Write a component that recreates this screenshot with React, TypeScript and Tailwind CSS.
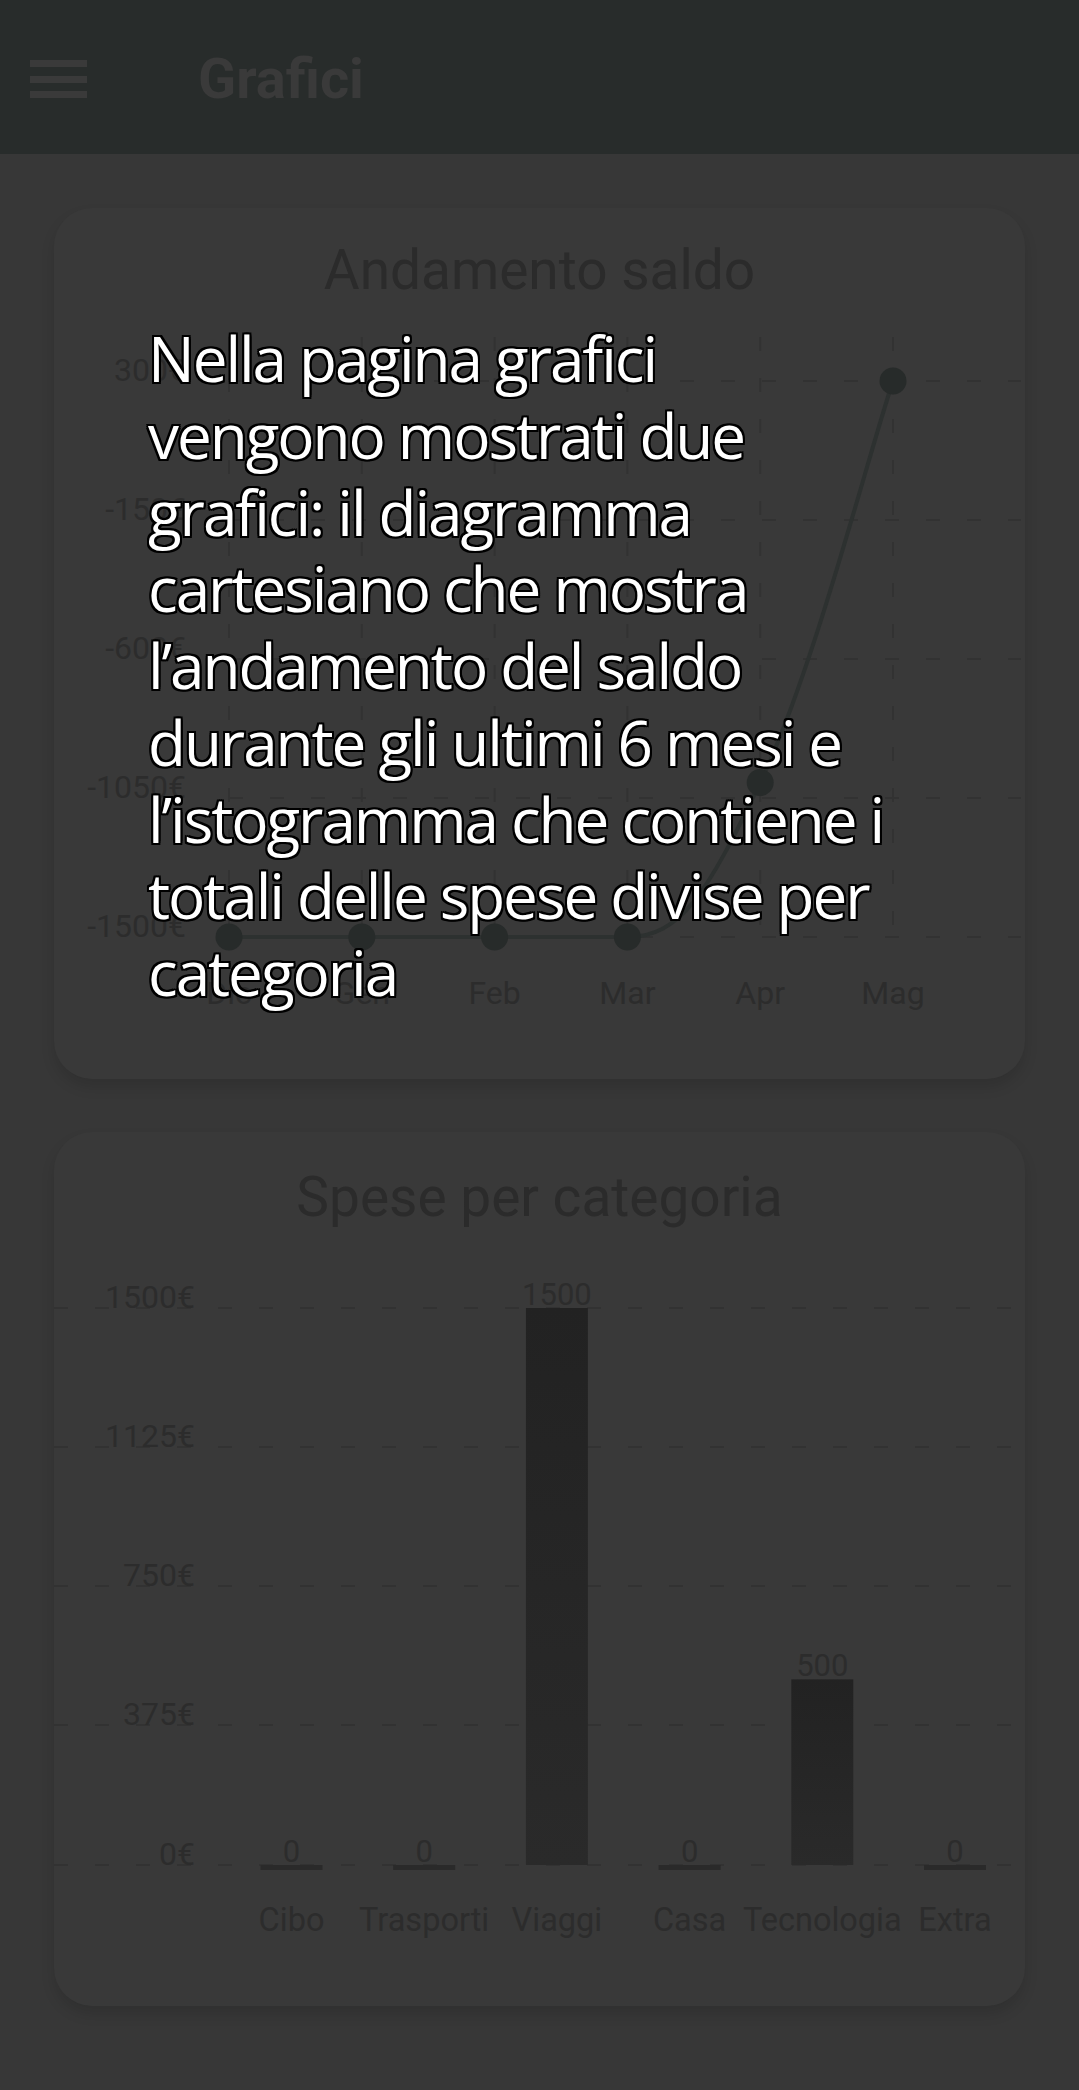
import React from "react";

const months = ["Dic", "Gen", "Feb", "Mar", "Apr", "Mag"];
const saldo = [-1500, -1500, -1500, -1500, -1000, 300];
const saldoTicks = ["300€", "-150€", "-600€", "-1050€", "-1500€"];

const categories = [
    { name: "Cibo", value: 0 },
    { name: "Trasporti", value: 0 },
    { name: "Viaggi", value: 1500 },
    { name: "Casa", value: 0 },
    { name: "Tecnologia", value: 500 },
    { name: "Extra", value: 0 },
];
const spesaTicks = ["1500€", "1125€", "750€", "375€", "0€"];

const gridY = [79, 218, 357, 496, 636];

function Header() {
    return (
        <div className="flex h-[154px] items-center bg-[#282c2b] pl-[30px] pt-[4px]">
            <svg width="57" height="38" viewBox="0 0 57 38" className="shrink-0">
                <rect x="0" y="0" width="57" height="7" fill="#3a3a3a" />
                <rect x="0" y="16" width="57" height="7" fill="#3a3a3a" />
                <rect x="0" y="31" width="57" height="7" fill="#3a3a3a" />
            </svg>
            <h1 className="ml-[111px] font-['Roboto',sans-serif] text-[56px] font-bold leading-none text-[#3a3a3a]">
                Grafici
            </h1>
        </div>
    );
}

function Card({ title, pt, children }: { title: string; pt: string; children: React.ReactNode }) {
    return (
        <div className="mx-[54px] rounded-[38px] bg-[#393939] shadow-[0_8px_14px_rgba(0,0,0,0.12)]">
            <div className={`${pt} text-center font-['Roboto',sans-serif] text-[55px] leading-[64px] text-[#2b2b2b]`}>
                {title}
            </div>
            {children}
        </div>
    );
}

function LineChart() {
    const xs = months.map((_, i) => 175 + i * 132.8);
    const toY = (v: number) => 635 - ((v + 1500) / 1800) * 556;
    const pts = saldo.map((v, i) => ({ x: xs[i], y: toY(v) }));

    // smoothed line, flat runs stay straight
    let d = `M ${pts[0].x} ${pts[0].y}`;
    for (let j = 1; j < pts.length; j++) {
        const pp = pts[Math.max(j - 2, 0)];
        const p = pts[j - 1];
        const c = pts[j];
        const n = pts[Math.min(j + 1, pts.length - 1)];
        if (p.y === c.y) {
            d += ` L ${c.x} ${c.y}`;
            continue;
        }
        const c1x = p.x + (c.x - pp.x) * 0.2;
        const c1y = pp.y === p.y ? p.y : p.y + (c.y - pp.y) * 0.2;
        const c2x = c.x - (n.x - p.x) * 0.2;
        const c2y = c.y - (n.y - p.y) * 0.2;
        d += ` C ${c1x} ${c1y} ${c2x} ${c2y} ${c.x} ${c.y}`;
    }

    return (
        <svg width="971" height="777" viewBox="0 0 971 777" className="block font-['Roboto',sans-serif]">
            {xs.map((x) => (
                <line key={x} x1={x} y1={35} x2={x} y2={635} stroke="#323232" strokeWidth="2" strokeDasharray="14 27" />
            ))}
            {[79, 218, 357, 496, 635].map((y) => (
                <line key={y} x1={175} y1={y} x2={967} y2={y} stroke="#323232" strokeWidth="2" strokeDasharray="14 27" />
            ))}
            {saldoTicks.map((t, i) => (
                <text key={t} x={132} y={[79, 218, 357, 496, 635][i]} textAnchor="end" fontSize="32" fill="#2c2c2c">
                    {t}
                </text>
            ))}
            <path d={d} fill="none" stroke="#2d3130" strokeWidth="4" />
            {pts.map((p, i) => (
                <circle key={i} cx={p.x} cy={p.y} r="13.5" fill="#272b2a" />
            ))}
            {months.map((m, i) => (
                <text key={m} x={xs[i]} y={702} textAnchor="middle" fontSize="32" fill="#2c2c2c">
                    {m}
                </text>
            ))}
        </svg>
    );
}

function BarChart() {
    const centers = categories.map((_, i) => 237.5 + i * 132.7);
    const toY = (v: number) => 636 - (v / 1500) * 557;

    return (
        <svg width="971" height="777" viewBox="0 0 971 777" className="block font-['Roboto',sans-serif]">
            <defs>
                <linearGradient id="bar" x1="0" y1="0" x2="0" y2="1">
                    <stop offset="0" stopColor="#222222" />
                    <stop offset="1" stopColor="#2a2a2a" />
                </linearGradient>
            </defs>
            {gridY.map((y) => (
                <line key={y} x1={0} y1={y} x2={964} y2={y} stroke="#323232" strokeWidth="2" strokeDasharray="14 27" />
            ))}
            {spesaTicks.map((t, i) => (
                <text key={t} x={141} y={gridY[i]} textAnchor="end" fontSize="32" fill="#2c2c2c">
                    {t}
                </text>
            ))}
            {categories.map((c, i) => {
                const top = c.value > 0 ? toY(c.value) : 636;
                const h = c.value > 0 ? 636 - top : 5;
                return (
                    <g key={c.name}>
                        <rect x={centers[i] - 31} y={top} width="62" height={h} fill={c.value > 0 ? "url(#bar)" : "#2a2a2a"} />
                        <text x={centers[i]} y={top - 3} textAnchor="middle" fontSize="31" fill="#2c2c2c">
                            {c.value}
                        </text>
                        <text x={centers[i]} y={702} textAnchor="middle" fontSize="32.5" fill="#2c2c2c">
                            {c.name}
                        </text>
                    </g>
                );
            })}
        </svg>
    );
}

export default function App() {
    return (
        <div className="relative min-h-[2090px] w-[1079px] bg-[#373737]">
            <Header />

            <div className="flex flex-col gap-[53px] pt-[54px]">
                <Card title="Andamento saldo" pt="pt-[30px]">
                    <LineChart />
                </Card>
                <Card title="Spese per categoria" pt="pt-[33px]">
                    <BarChart />
                </Card>
            </div>

            {/* tutorial overlay */}
            <p className="absolute left-[148px] top-[320px] font-['Open_Sans',sans-serif] text-[62px] leading-[76.75px] tracking-[-0.033em] text-white [text-shadow:-2px_-2px_0_#000,2px_-2px_0_#000,-2px_2px_0_#000,2px_2px_0_#000,0_2px_0_#000,0_-2px_0_#000,2px_0_0_#000,-2px_0_0_#000]">
                Nella pagina grafici
                <br />
                vengono mostrati due
                <br />
                grafici: il diagramma
                <br />
                cartesiano che mostra
                <br />
                l’andamento del saldo
                <br />
                durante gli ultimi 6 mesi e
                <br />
                l’istogramma che contiene i
                <br />
                totali delle spese divise per
                <br />
                categoria
            </p>
        </div>
    );
}
